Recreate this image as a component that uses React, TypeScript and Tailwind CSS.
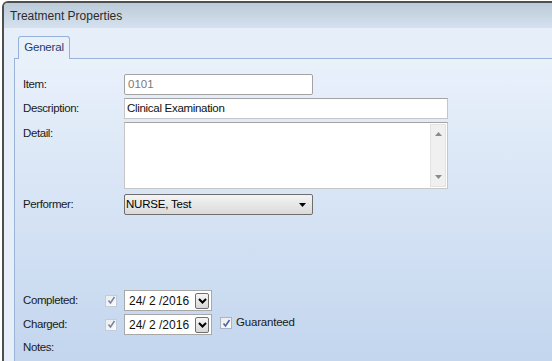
import React from 'react';

const font = { fontFamily: '"Liberation Sans", Arial, sans-serif' };

const Check: React.FC<{ dim?: boolean }> = ({ dim }) => (
  <div className={`w-[12px] h-[12px] border ${dim ? 'border-[#c3ccd8]' : 'border-[#a9b4c6]'} bg-gradient-to-br from-[#ececec] to-[#fbfbfb] flex items-center justify-center`}>
    <svg width="9" height="9" viewBox="0 0 9 9">
      <path d="M1.5 4.5 L3.5 7 L7.5 1" fill="none" stroke={dim ? '#7385b0' : '#4b63a6'} strokeWidth="1.6" />
    </svg>
  </div>
);

const DateBox: React.FC = () => (
  <div className="w-[88px] h-[21px] border border-[#a8a8a8] bg-white flex items-center pl-[4px] pr-[2px] justify-between">
    <span className="text-[12px] text-[#111]">24/ 2 /2016</span>
    <div className="w-[14px] h-[16px] border border-[#6f6f6f] rounded-[2px] bg-gradient-to-b from-[#f6f6f6] to-[#d8d8d8] flex items-center justify-center">
      <svg width="9" height="6" viewBox="0 0 9 6">
        <path d="M1 1 L4.5 4.5 L8 1" fill="none" stroke="#000" strokeWidth="2" />
      </svg>
    </div>
  </div>
);

const Label: React.FC<{ text: string; w?: string }> = ({ text, w = 'w-[101px]' }) => (
  <div className={`${w} shrink-0 text-[11.5px] tracking-[-0.4px] text-[#1a1a1a]`}>{text}</div>
);

export default function App() {
  return (
    <div className="w-[552px] h-[361px] overflow-hidden bg-white pl-[2px] pt-[1px]" style={font}>
      <div className="h-[400px] border-l-2 border-t-2 border-[#4f4f4f] rounded-tl-[6px] flex flex-col overflow-hidden">
        {/* title bar */}
        <div className="h-[25px] shrink-0 bg-gradient-to-b from-[#bccbd9] to-[#d5e1ee] flex items-center pl-[6px] text-[12px] text-[#2b2b2b]">
          Treatment Properties
        </div>

        <div className="flex-1 bg-[#e6eef9] pl-[10px] pt-[8px] flex flex-col">
          {/* tabs */}
          <div className="h-[22px] flex shrink-0">
            <div className="ml-[4px] w-[52px] h-[23px] border border-b-0 border-[#95b2dc] rounded-t-[3px] bg-[#e8f0fa] flex items-center justify-center text-[11.5px] tracking-[-0.2px] text-[#1e3c70] relative z-10">
              General
            </div>
          </div>

          {/* panel */}
          <div className="flex-1 border-l border-t border-[#9bb3db] bg-gradient-to-b from-[#e9f1fb] to-[#bed2ec] pl-[8px] pt-[15px] flex flex-col">
            <div className="h-[21px] flex items-center">
              <Label text="Item:" />
              <div className="w-[189px] h-[21px] border border-[#a3a3a3] rounded-[2px] bg-white flex items-center pl-[3px] text-[11.5px] text-[#7a7a7a]">
                0101
              </div>
            </div>

            <div className="h-[21px] mt-[3px] flex items-center">
              <Label text="Description:" />
              <div className="w-[324px] h-[21px] border border-[#c6c6c6] border-t-[#a3a3a3] bg-white flex items-center pl-[2px] text-[11.5px] text-[#111] tracking-[-0.3px]">
                Clinical Examination
              </div>
            </div>

            <div className="h-[67px] mt-[3px] flex items-start">
              <div className="pt-[3px]"><Label text="Detail:" /></div>
              <div className="w-[324px] h-[67px] border border-[#c6c6c6] border-t-[#a3a3a3] bg-white flex justify-end p-[1px]">
                <div className="w-[16px] h-full bg-[#f0f0f0] border border-[#e2e2e2] flex flex-col items-center justify-between py-[7px]">
                  <svg width="7" height="4" viewBox="0 0 7 4"><path d="M0 4 L3.5 0 L7 4 Z" fill="#8a8a8a" /></svg>
                  <svg width="7" height="4" viewBox="0 0 7 4"><path d="M0 0 L3.5 4 L7 0 Z" fill="#8a8a8a" /></svg>
                </div>
              </div>
            </div>

            <div className="h-[21px] mt-[5px] flex items-center">
              <Label text="Performer:" />
              <div className="w-[189px] h-[21px] border border-[#6e6e6e] rounded-[2px] bg-gradient-to-b from-[#f4f4f4] to-[#dadada] flex items-center justify-between pl-[1px] pr-[6px] text-[11.5px] tracking-[-0.2px] text-[#000]">
                <span>NURSE, Test</span>
                <svg width="7" height="4" viewBox="0 0 7 4"><path d="M0 0 L7 0 L3.5 4 Z" fill="#000" /></svg>
              </div>
            </div>

            <div className="h-[21px] mt-[75px] flex items-center">
              <Label text="Completed:" w="w-[82px]" />
              <Check dim />
              <div className="ml-[7px]"><DateBox /></div>
            </div>

            <div className="h-[21px] mt-[3px] flex items-center">
              <Label text="Charged:" w="w-[82px]" />
              <Check dim />
              <div className="ml-[7px]"><DateBox /></div>
              <div className="ml-[8px] mb-[3px] flex items-center gap-[4px]">
                <Check />
                <span className="text-[11.5px] tracking-[-0.2px] text-[#1a1a1a]">Guaranteed</span>
              </div>
            </div>

            <div className="h-[14px] mt-[6px] flex items-center">
              <Label text="Notes:" />
            </div>
          </div>
        </div>
      </div>
    </div>
  );
}
